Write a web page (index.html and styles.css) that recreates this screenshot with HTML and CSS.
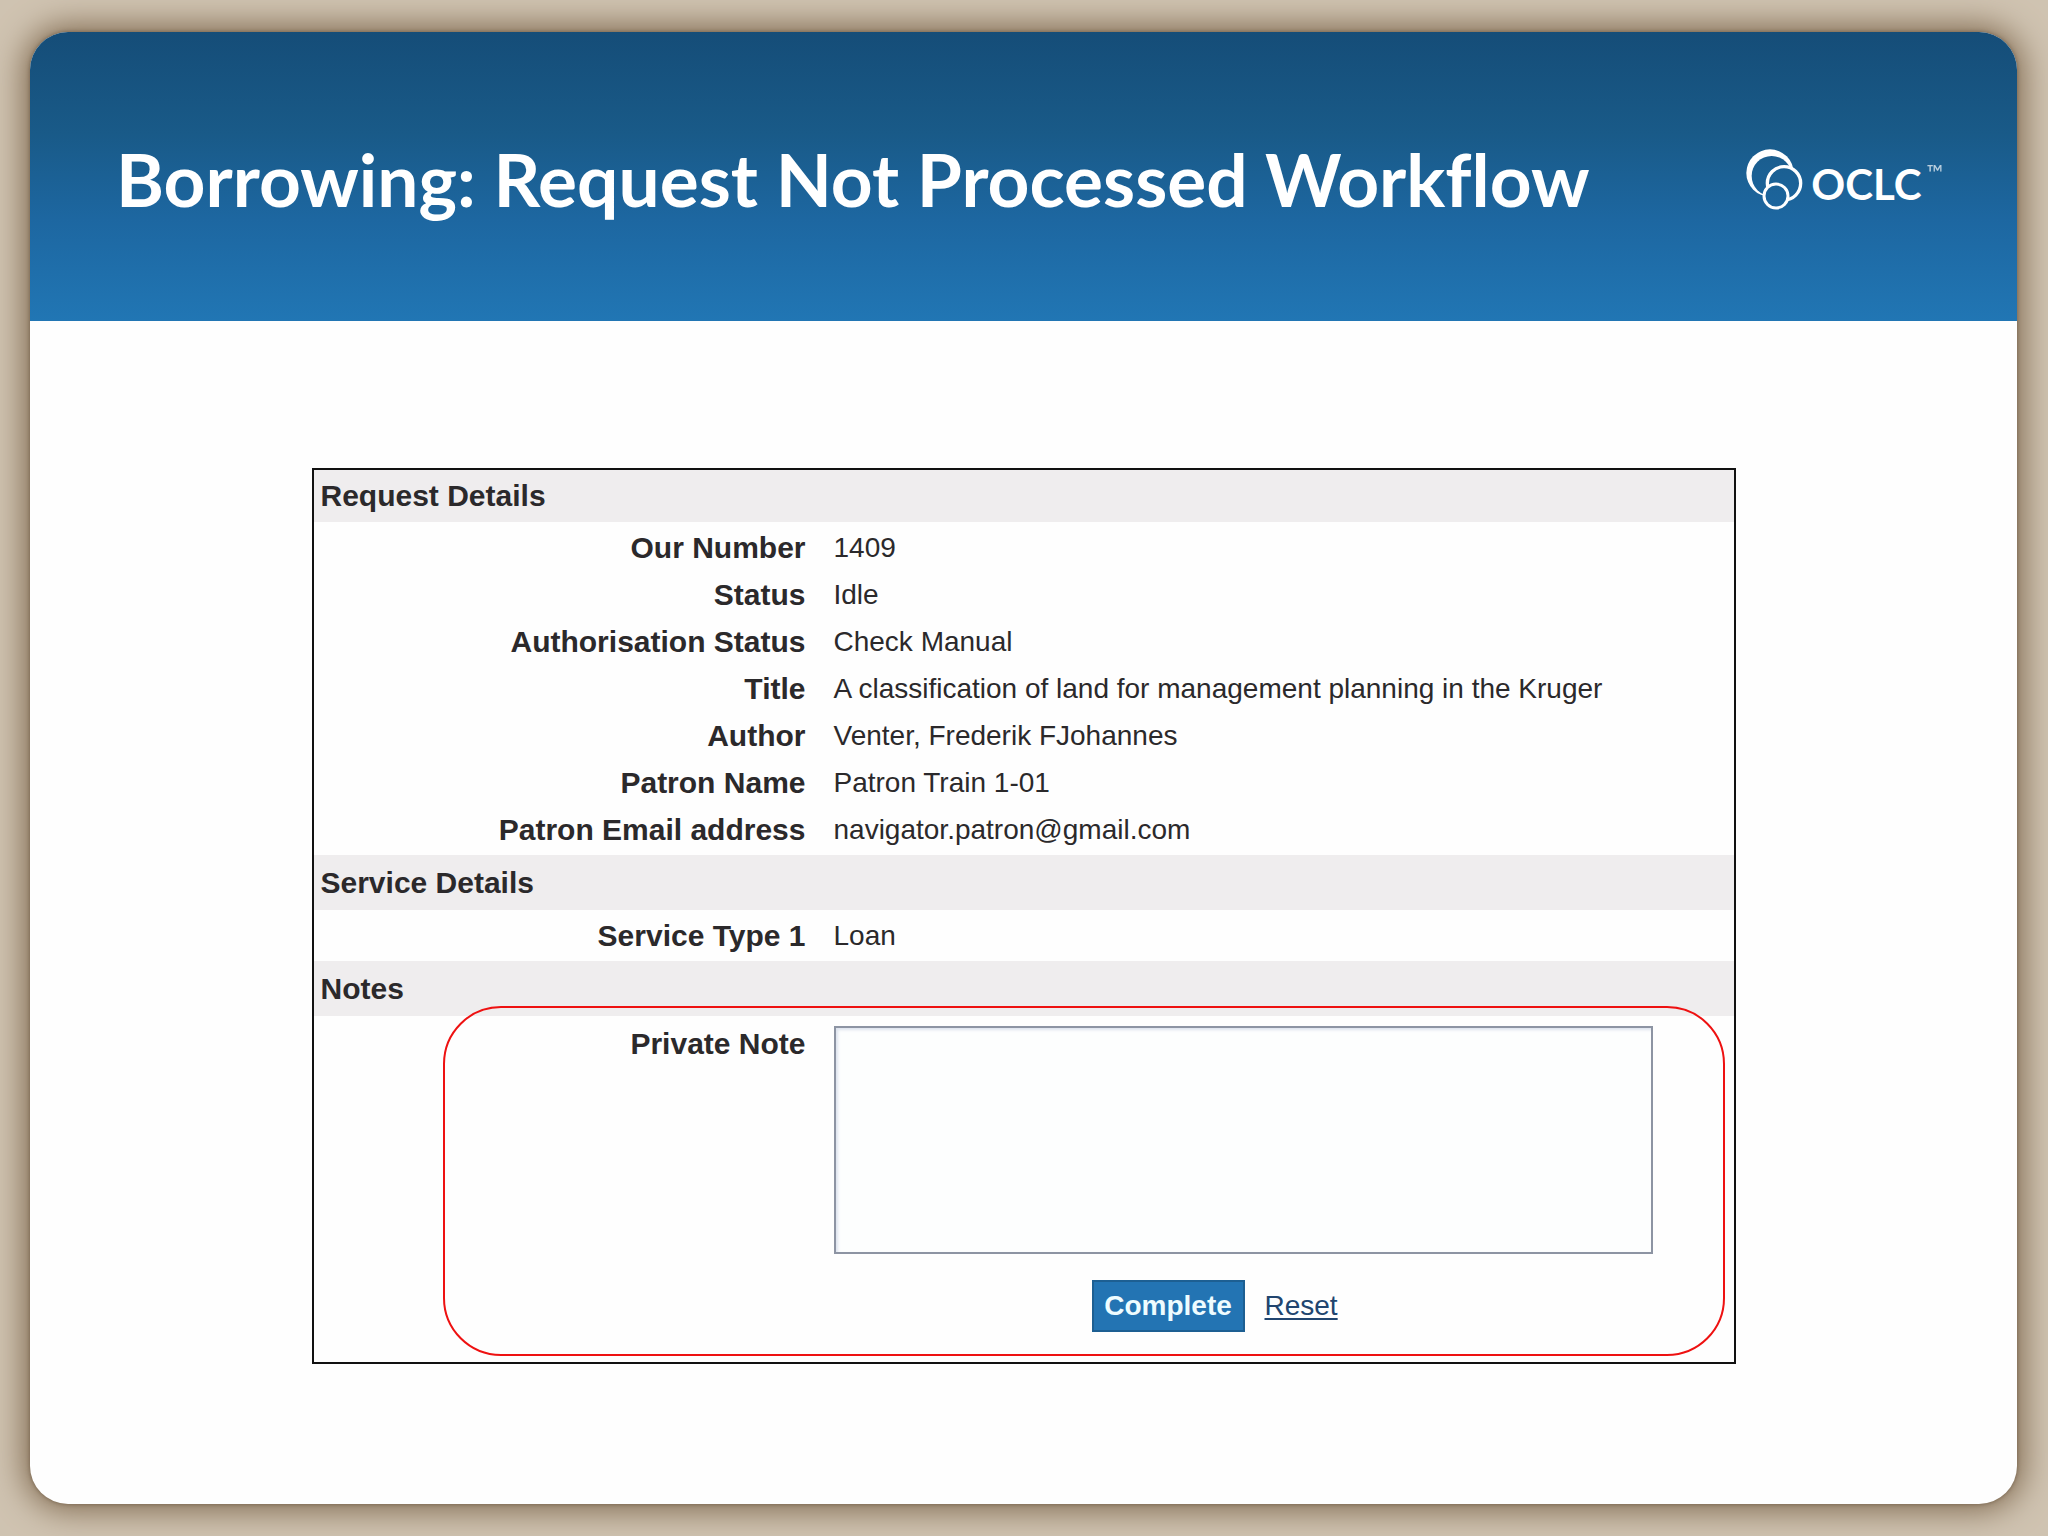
FILE: index.html
```html
<!DOCTYPE html>
<html lang="en">
<head>
<meta charset="utf-8">
<title>Borrowing: Request Not Processed Workflow</title>
<link rel="stylesheet" href="styles.css">
</head>
<body>
<main class="slide">
  <header class="banner">
    <h1 class="banner-title">Borrowing: Request Not Processed Workflow</h1>
    <div class="logo">
      <svg class="logo-mark" viewBox="76 57 171 183" aria-hidden="true">
        <defs>
          <mask id="crescent" maskUnits="userSpaceOnUse" x="70" y="50" width="190" height="200">
            <rect x="70" y="50" width="190" height="200" fill="#fff"/>
            <circle cx="153" cy="138" r="60" fill="#000"/>
            <circle cx="190" cy="160" r="52" fill="#000"/>
            <circle cx="166" cy="198" r="36" fill="#000"/>
          </mask>
          <mask id="ring" maskUnits="userSpaceOnUse" x="70" y="50" width="190" height="200">
            <rect x="70" y="50" width="190" height="200" fill="#fff"/>
            <circle cx="166" cy="198" r="36" fill="#000"/>
          </mask>
        </defs>
        <circle cx="148" cy="129" r="71" fill="#fff" mask="url(#crescent)"/>
        <circle cx="190" cy="160" r="50" fill="none" stroke="#fff" stroke-width="10" mask="url(#ring)"/>
        <circle cx="166" cy="198" r="36" fill="none" stroke="#fff" stroke-width="9"/>
      </svg>
      <span class="logo-name">OCLC</span><span class="logo-tm">™</span>
    </div>
  </header>

  <section class="panel">
    <h2 class="section-head">Request Details</h2>
    <table class="details">
      <tr><th scope="row">Our Number</th><td>1409</td></tr>
      <tr><th scope="row">Status</th><td>Idle</td></tr>
      <tr><th scope="row">Authorisation Status</th><td>Check Manual</td></tr>
      <tr><th scope="row">Title</th><td>A classification of land for management planning in the Kruger</td></tr>
      <tr><th scope="row">Author</th><td>Venter, Frederik FJohannes</td></tr>
      <tr><th scope="row">Patron Name</th><td>Patron Train 1-01</td></tr>
      <tr><th scope="row">Patron Email address</th><td>navigator.patron@gmail.com</td></tr>
    </table>
    <h2 class="section-head">Service Details</h2>
    <table class="details">
      <tr><th scope="row">Service Type 1</th><td>Loan</td></tr>
    </table>
    <h2 class="section-head">Notes</h2>
    <form class="note">
      <label class="note-label" for="private-note">Private Note</label>
      <textarea class="note-text" id="private-note"></textarea>
      <div class="actions">
        <button class="complete" type="button">Complete</button>
        <a class="reset" href="#">Reset</a>
      </div>
      <div class="callout"></div>
    </form>
  </section>
</main>
</body>
</html>
```
FILE: styles.css
```css
:root {
  --label-width: 492px;
  --column-gap: 28px;
}

* {
  box-sizing: border-box;
}

body {
  margin: 0;
  padding: 32px 31px 32px 30px;
  min-height: 100vh;
  display: flex;
  background: #cfc3b1;
  color: #2b292b;
  font-family: "Liberation Sans", Arial, sans-serif;
  font-size: 28px;
}

.slide {
  flex: 1;
  border-radius: 38px;
  overflow: hidden;
  background: #fefefe;
  box-shadow: 0 0 4px #75624c, 0 0 32px 6px #806a50;
}

.banner {
  display: flex;
  align-items: center;
  justify-content: space-between;
  height: 289px;
  padding: 4px 74px 0 86px;
  background: linear-gradient(#154d78, #195a88 35%, #1d67a1 65%, #2176b4);
  color: #fff;
}

.banner-title {
  margin: 0;
  font-family: "Trebuchet MS", Lato, sans-serif;
  font-size: 73px;
  font-weight: 700;
  font-variant-ligatures: none;
  line-height: 88px;
}

.logo {
  display: flex;
  align-items: center;
  padding-top: 2px;
}

.logo-mark {
  width: 57px;
  height: 61px;
  margin-right: 8px;
}

.logo-name {
  padding-top: 8px;
  font-family: Lato, sans-serif;
  font-size: 42px;
  font-weight: 700;
  line-height: 48px;
}

.logo-tm {
  align-self: flex-start;
  padding: 12px 0 0 5px;
  font-family: Lato, sans-serif;
  font-size: 22px;
  line-height: 24px;
  opacity: 0.7;
}

.panel {
  width: 90%;
  max-width: 1424px;
  margin: 147px auto 0;
  border: 2px solid #111;
}

.section-head {
  margin: 0;
  padding: 0 7px;
  background: #efedee;
  font-size: 30px;
  line-height: 55px;
}

.section-head:first-child {
  line-height: 52px;
}

.details {
  width: 100%;
  border-collapse: collapse;
  margin: 2px 0;
}

.details th,
.details td {
  padding: 0;
  line-height: 47px;
}

.details th {
  width: var(--label-width);
  font-size: 30px;
  text-align: right;
}

.details td {
  padding-left: var(--column-gap);
}

.note {
  position: relative;
  display: grid;
  grid-template-columns: var(--label-width) 1fr;
  column-gap: var(--column-gap);
  padding: 10px 81px 30px 0;
}

.note-label {
  font-size: 30px;
  font-weight: 700;
  line-height: 36px;
  text-align: right;
}

.note-text {
  height: 228px;
  border: 2px solid #8d94a3;
  background: #fdfefe;
  box-shadow: inset 2px 2px 3px #dde3ee;
  font: inherit;
  resize: none;
}

.actions {
  grid-column: 2;
  display: flex;
  align-items: center;
  gap: 20px;
  margin-top: 26px;
  padding-left: 258px;
}

.complete {
  width: 153px;
  height: 52px;
  padding: 0;
  border: 2px solid #1d5f92;
  background: #2374b3;
  color: #eefcff;
  font: 700 28px "Liberation Sans", Arial, sans-serif;
}

.reset {
  color: #21456f;
  text-decoration-thickness: 2px;
  text-underline-offset: 3px;
}

/* Red outline drawn over the form to call attention to it */
.callout {
  position: absolute;
  inset: -10px 9px 6px 129px;
  border: 2px solid #ee1111;
  border-radius: 58px;
  pointer-events: none;
}
```
